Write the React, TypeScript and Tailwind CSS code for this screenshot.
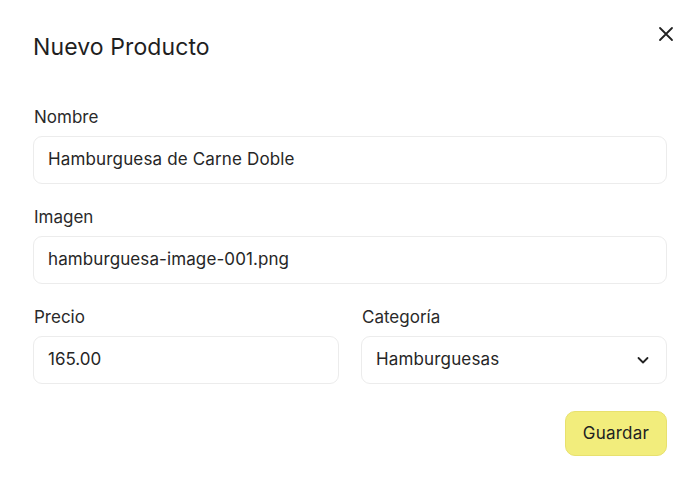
import React from "react";

const font = { fontFamily: "Inter, 'Noto Sans', sans-serif" };

export default function App() {
  return (
    <div className="w-[700px] h-[488px] bg-white text-[#1c1c1c]" style={font}>
      <div className="px-[33px] pt-[32px] pr-[33px] relative">
        <div className="flex items-center justify-between h-[30px]">
          <h1 className="text-[23px] leading-[30px] font-normal text-[#1f1f1f] tracking-[0.1px]">Nuevo Producto</h1>
        </div>
        <button className="absolute right-[26px] top-[26px] w-[16px] h-[16px] flex items-center justify-center text-[#222]">
          <svg width="16" height="16" viewBox="0 0 16 16" fill="none" stroke="currentColor" strokeWidth="1.8" strokeLinecap="round">
            <path d="M2 2L14 14M14 2L2 14" />
          </svg>
        </button>

        <div className="mt-[43px] flex flex-col gap-[21px]">
          <div className="flex flex-col gap-[7px]">
            <label className="text-[17px] leading-[24px] text-[#2a2a2a] pl-[1px]">Nombre</label>
            <div className="h-[48px] rounded-[9px] border border-[#ececec] flex items-center px-[14px] text-[17px] text-[#262626] tracking-[0.15px]">
              Hamburguesa de Carne Doble
            </div>
          </div>
          <div className="flex flex-col gap-[7px]">
            <label className="text-[17px] leading-[24px] text-[#2a2a2a] pl-[1px]">Imagen</label>
            <div className="h-[48px] rounded-[9px] border border-[#ececec] flex items-center px-[14px] text-[17px] text-[#262626] tracking-[0.1px]">
              hamburguesa-image-001.png
            </div>
          </div>
          <div className="grid grid-cols-2 gap-[22px]">
            <div className="flex flex-col gap-[7px]">
              <label className="text-[17px] leading-[24px] text-[#2a2a2a] pl-[1px]">Precio</label>
              <div className="h-[48px] rounded-[9px] border border-[#ececec] flex items-center px-[14px] text-[17px] text-[#262626]">
                165.00
              </div>
            </div>
            <div className="flex flex-col gap-[7px]">
              <label className="text-[17px] leading-[24px] text-[#2a2a2a] pl-[1px]">Categoría</label>
              <div className="h-[48px] rounded-[9px] border border-[#ececec] flex items-center justify-between px-[14px] text-[17px] text-[#262626] tracking-[0.15px]">
                <span>Hamburguesas</span>
                <svg width="14" height="14" viewBox="0 0 14 14" fill="none" stroke="#222" strokeWidth="1.8" strokeLinecap="round" strokeLinejoin="round" className="mr-[2px]">
                  <path d="M2.5 5L7 9.5L11.5 5" />
                </svg>
              </div>
            </div>
          </div>
        </div>

        <div className="flex justify-end mt-[27px]">
          <button className="h-[45px] px-[17px] rounded-[10px] bg-[#f2ed7c] border border-[#e8e16e] text-[17px] text-[#222] tracking-[0.2px]">
            Guardar
          </button>
        </div>
      </div>
    </div>
  );
}
